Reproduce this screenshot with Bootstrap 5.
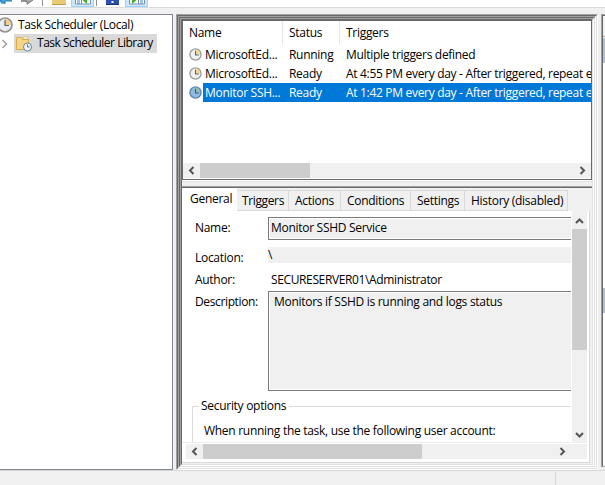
<!DOCTYPE html>
<html lang="en">
<head>
<meta charset="utf-8">
<title>Task Scheduler</title>
<link href="https://cdn.jsdelivr.net/npm/bootstrap@5.3.0/dist/css/bootstrap.min.css" rel="stylesheet">
<style>
html,body{height:485px;overflow:hidden}
body{font:12px/18px "Open Sans","Noto Sans",sans-serif;color:#000;background:#f0f0f0;letter-spacing:-.29px}
svg{display:block;flex:none}
.tight{letter-spacing:-.37px}
.tighter{letter-spacing:-.48px}
.toolstrip{height:8px;border-bottom:1px solid #dadada}
.workspace{height:456px;margin-top:6px}
.tree-pane{width:173px;border:1px solid #828790;border-left:0;margin-right:3px}
.tree-root{height:19px}
.tree-root span{padding-left:5px}
.tree-chosen{background:#d9d9d9;height:19px;width:143px}
.tree-chosen span{padding-left:5px;margin-top:-1px}
.tree-arrow{width:14px}
.frame-pane{width:422px;flex:none}
.bevel{border:1px solid;border-color:#a0a0a0 #fff #fff #a0a0a0;height:100%}
.bevel>.bevel-in{border:1px solid;border-color:#696969 #e0e0e0 #e0e0e0 #696969;height:100%}
.task-list{height:160px;border:1px solid #696969;background:#fff}
.list-head{height:24px}
.cell-name{width:100px;padding-left:6px;flex:none}
.cell-status{width:57px;padding-left:6px;flex:none}
.cell-trig{padding-left:6px}
.list-head .cell-name,.list-head .cell-status{border-right:1px solid #e5e5e5}
.list-head>div{padding-top:3px}
.task-row{height:19px}
.task-row .row-fill{padding-top:1px}
.task-row .cell-trig{letter-spacing:-.31px}
.task-icon{width:20px;padding:3px 0 0 6px;flex:none}
.task-row .label-name{width:80px;padding-left:2px;flex:none}
.chosen .row-fill{background:#0078d7;color:#fff}
.bar-h{height:15px;background:#f0f0f0}
.list-scroll{margin:auto 0 1px}
.arrow-btn{width:17px;height:15px}
.bar-v{width:15px;background:#f0f0f0;margin-left:1px}
.thumb{background:#cdcdcd}
.splitter{height:6px;background:#f0f0f0;border-top:1px solid #fff;box-shadow:inset 0 1px #e3e3e3}
.detail{height:278px;border-top:1px solid #a0a0a0;background:#f0f0f0}
.detail-in{border-top:1px solid #696969;height:100%}
.tabs{height:23px}
.tab-on{width:55px;height:23px;background:#fff;padding:2px 0 0 8px}
.tab-off{height:21px;padding:1px 0 0 6px;border:1px solid #d9d9d9;border-left:0}
.tab-first{width:52px;padding-left:5px}
.page{width:408px;height:252px;background:#fff;border:1px solid #d9d9d9;border-top:0;border-left:0}
.form-zone{width:389px;height:232px;border-bottom:1px solid #ececec}
.lab{width:73px;flex:none;padding-top:2px}
.form-line{padding-left:13px}
.field{background:#f0f0f0}
.boxed{border:1px solid #7a7a7a;border-right:0;box-shadow:inset 1px 1px #fff,inset 0 -1px #fff;padding-left:2px;height:23px;padding-top:1px}
.name-line{padding-top:6px}
.loc{padding-top:7px}
.loc .lab{padding-top:2px}
.loc .field{height:16px;line-height:16px}
.author{padding-top:2px}
.who{padding:2px 0 0 3px}
.desc{padding-top:2px}
.desc .boxed{height:100px;padding-left:5px}
.group{margin:15px 0 0 10px;border:1px solid #dcdcdc;border-right:0;border-bottom:0;height:37px}
.group-title{background:#fff;margin:-10px 0 0 6px;padding:0 1px 0 2px;width:90px}
.when{padding:7px 0 0 11px}
.lower-bar{margin:1px 2px 0 4px}
.side-pane{width:4px;border:1px solid #a0a0a0;border-right:0;box-shadow:inset 1px 1px #696969;margin-left:3px;height:453px;padding:2px 0 0 1px;background:#fff}
.status{height:15px;border-top:1px solid #d7d7d7}
.status div{width:556px;border-right:1px solid #d7d7d7;height:13px;margin-top:1px}
</style>
<script src="https://cdn.jsdelivr.net/npm/bootstrap@5.3.0/dist/js/bootstrap.bundle.min.js"></script>
</head>
<body>
<svg width="0" height="0" class="position-absolute">
  <symbol id="clock" viewBox="0 0 14 14"><circle cx="7" cy="7" r="6" fill="#eef0f2" stroke="#9a9a9a" stroke-width="1.4"/><path d="M7 7V2a5 5 0 0 1 5 5z" fill="#f3d98b"/><path d="M7 3v4.500h3.500" fill="none" stroke="#5c6670" stroke-width="1.2"/></symbol>
  <symbol id="clock-blue" viewBox="0 0 14 14"><circle cx="7" cy="7" r="6" fill="#8fbbe0" stroke="#5b83a8" stroke-width="1.4"/><path d="M7 7V2a5 5 0 0 1 5 5z" fill="#8fbfae"/><path d="M7 3v4.500h3.500" fill="none" stroke="#2c5f8c" stroke-width="1.2"/></symbol>
  <symbol id="left" viewBox="0 0 17 15"><path d="M10.500 4L7 7.500l3.500 3.500" fill="none" stroke="#555" stroke-width="2"/></symbol>
  <symbol id="right" viewBox="0 0 17 15"><path d="M6.500 4L10 7.500 6.500 11" fill="none" stroke="#555" stroke-width="2"/></symbol>
</svg>
<div class="toolstrip bg-white overflow-hidden">
<svg width="160" height="7" viewBox="0 0 160 7"><path d="M0 0h12v1H5v2L2 4l-2-2z" fill="#4ba3dc"/><path d="M0 0l5 4V1h7" fill="none" stroke="#247bb5"/><path d="M21 0h12l-6 5V2h-6z" fill="#aaa"/><path d="M21 1h6v3l6-4" fill="none" stroke="#777"/><path d="M42.500 0v6M96.500 0v6" stroke="#8f8f8f"/><path d="M52 0h14v4.500H52z" fill="#e9ca77"/><path d="M52 4.500h14" stroke="#c69b42"/>
<path d="M71.500-1h22v7.500h-22zM125.500-1h22v7.500h-22z" fill="#cce8ff" stroke="#99d1ff"/><path d="M75.500-1h15v5h-15zM129.500-1h15v5h-15z" fill="#fff" stroke="#7890a8"/><path d="M81.500 0v4M138.500 0v4" stroke="#7890a8"/><path d="M77 1h3M77 3h3M140 1h3M140 3h3" stroke="#4b86c0"/><path d="M87 0v4l-4-3.500V0zM132 0v4l4-3.500V0z" fill="#3fae2a"/><path d="M106 0h13v4.500h-13z" fill="#2a4fae"/><path d="M106 4.500h13" stroke="#1c3474"/><path d="M111.500 1h2v2h-2z" fill="#fff"/></svg>
</div>
<div class="workspace d-flex">
  <div class="tree-pane bg-white overflow-hidden flex-shrink-0">
    <div class="tree-root d-flex align-items-center"><svg width="13" height="16" viewBox="3 0 13 16"><circle cx="8" cy="8" r="7" fill="#e9edf1" stroke="#929292" stroke-width="1.700"/><path d="M8 8V2a6 6 0 0 1 6 6z" fill="#f5cf7a"/><path d="M8 3v5.500h4" fill="none" stroke="#4c6580" stroke-width="1.200"/></svg><span class="tight text-nowrap">Task Scheduler (Local)</span></div>
    <div class="d-flex"><div class="tree-arrow"><svg width="14" height="19"><path d="M2.500 6L6.500 10l-4 4" fill="none" stroke="#a0a0a0" stroke-width="1.500"/></svg></div>
      <div class="tree-chosen d-flex align-items-center"><svg width="18" height="17" viewBox="0 0 18 17"><path d="M2.500 14.500v-12h5l1 2h6v10z" fill="#f6d685" stroke="#d9ac4c"/><path d="M9 2h5v2H9z" fill="#fff" stroke="#d9ac4c" stroke-width=".6"/><circle cx="13.500" cy="12" r="4" fill="#eef4f8" stroke="#708594"/><path d="M13.500 9.500V12h2" fill="none" stroke="#34749c"/></svg><span class="tighter text-nowrap">Task Scheduler Library</span></div></div>
  </div>
  <div class="frame-pane"><div class="bevel"><div class="bevel-in"><div class="bevel"><div class="bevel-in"><div class="bevel"><div class="bevel-in">
    <div class="task-list d-flex flex-column overflow-hidden">
      <div class="list-head d-flex flex-shrink-0"><div class="cell-name">Name</div><div class="cell-status">Status</div><div class="cell-trig">Triggers</div></div>
      <div class="task-row d-flex text-nowrap"><div class="task-icon"><svg width="13" height="13"><use href="#clock"/></svg></div><div class="row-fill d-flex flex-grow-1"><div class="label-name">MicrosoftEd...</div><div class="cell-status">Running</div><div class="cell-trig">Multiple triggers defined</div></div></div>
      <div class="task-row d-flex text-nowrap"><div class="task-icon"><svg width="13" height="13"><use href="#clock"/></svg></div><div class="row-fill d-flex flex-grow-1"><div class="label-name">MicrosoftEd...</div><div class="cell-status">Ready</div><div class="cell-trig">At 4:55 PM every day - After triggered, repeat e</div></div></div>
      <div class="task-row chosen d-flex text-nowrap"><div class="task-icon"><svg width="13" height="13"><use href="#clock-blue"/></svg></div><div class="row-fill d-flex flex-grow-1"><div class="label-name">Monitor SSH...</div><div class="cell-status">Ready</div><div class="cell-trig">At 1:42 PM every day - After triggered, repeat e</div></div></div>
      <div class="bar-h list-scroll d-flex flex-shrink-0"><svg class="arrow-btn"><use href="#left"/></svg><svg width="110" height="15"><rect width="110" height="15" fill="#cdcdcd"/></svg><svg class="arrow-btn ms-auto"><use href="#right"/></svg></div>
    </div>
    <div class="splitter"></div>
    <div class="detail"><div class="detail-in">
      <div class="tabs d-flex align-items-end">
        <div class="tab-on">General</div><div class="tab-off tab-first tight">Triggers</div><div class="tab-off" style="width:52px">Actions</div><div class="tab-off" style="width:70px">Conditions</div><div class="tab-off" style="width:54px">Settings</div><div class="tab-off" style="width:103px">History (disabled)</div>
      </div>
      <div class="page">
        <div class="d-flex">
          <div class="form-zone overflow-hidden">
            <div class="form-line name-line d-flex"><div class="lab">Name:</div><div class="field boxed flex-grow-1">Monitor SSHD Service</div></div>
            <div class="form-line d-flex loc"><div class="lab">Location:</div><div class="field flex-grow-1">\</div></div>
            <div class="form-line d-flex author"><div class="lab">Author:</div><div class="tight who">SECURESERVER01\Administrator</div></div>
            <div class="form-line d-flex desc"><div class="lab tight">Description:</div><div class="field boxed flex-grow-1">Monitors if SSHD is running and logs status</div></div>
            <div class="group"><div class="group-title text-nowrap">Security options</div><div class="when text-nowrap">When running the task, use the following user account:</div></div>
          </div>
          <div class="bar-v d-flex flex-column"><svg width="15" height="18"><path d="M4 12l3.500-3.500L11 12" fill="none" stroke="#555" stroke-width="2"/></svg><div class="thumb flex-grow-1"></div><svg width="15" height="93"><path d="M4 83l3.500 3.500L11 83" fill="none" stroke="#555" stroke-width="2"/></svg></div>
        </div>
        <div class="lower-bar bar-h d-flex"><svg class="arrow-btn"><use href="#left"/></svg><svg width="219" height="15"><rect width="219" height="15" fill="#cdcdcd"/></svg><svg class="arrow-btn ms-auto me-3"><use href="#right"/></svg></div>
      </div>
    </div></div>
  </div></div></div></div></div></div></div>
  <div class="side-pane flex-shrink-0"><svg width="2" height="450"><path d="M0 0h2v19H0z" fill="#f0f0f0"/><path d="M0 19h2v1H0z" fill="#a0a0a0"/><path d="M0 21h2v25H0zM0 271h2v25H0z" fill="#a9c0df"/></svg></div>
</div>
<div class="status"><div></div></div>
</body>
</html>
